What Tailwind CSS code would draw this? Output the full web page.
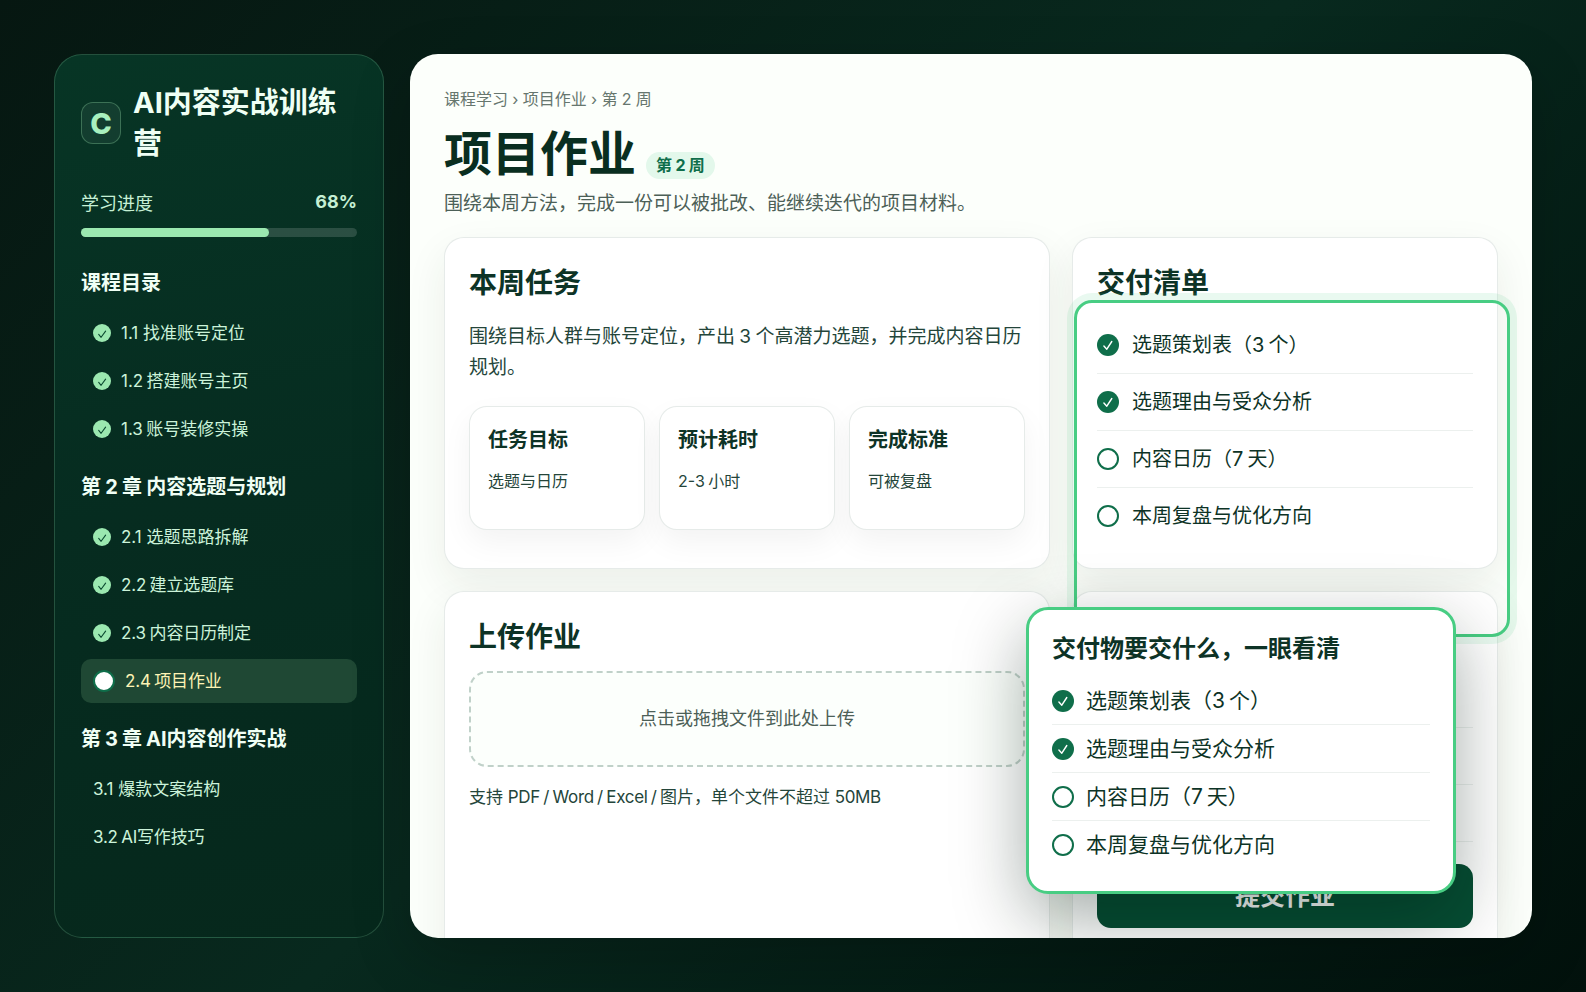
<!DOCTYPE html>
<html lang="zh-CN">
<head>
  <meta charset="UTF-8" />
  <meta name="viewport" content="width=device-width, initial-scale=1.0" />
  <title>项目作业 – AI内容实战训练营</title>
  <script src="https://cdn.jsdelivr.net/npm/@tailwindcss/browser@4"></script>
</head>
<body class="h-screen overflow-hidden bg-linear-135 from-[#061711] via-[#08291e] to-[#02110c] font-['Inter','Noto_Sans_CJK_SC',sans-serif] text-[#0d3326]">

  <!-- Ícones partilhados -->
  <svg class="hidden">
    <symbol id="feito" viewBox="0 0 22 22">
      <circle cx="11" cy="11" r="11" fill="#0f6e4a" />
      <path d="M6.9 12l2.9 3.2 5-7.7" fill="none" stroke="#fff" stroke-width="1.4" stroke-linecap="round" stroke-linejoin="round" />
    </symbol>
    <symbol id="pendente" viewBox="0 0 22 22">
      <circle cx="11" cy="11" r="10" fill="#fff" stroke="#0f6e4a" stroke-width="2" />
    </symbol>
    <symbol id="aula-feita" viewBox="0 0 18 18">
      <circle cx="9" cy="9" r="9" fill="#9be8b0" />
      <path d="M5.7 10.4l2.4 2.9 4.5-6.2" fill="none" stroke="#0b4a31" stroke-width="1.1" stroke-linecap="round" stroke-linejoin="round" />
    </symbol>
  </svg>

  <div class="flex h-full gap-[26px] p-[54px]">

    <!-- Barra lateral -->
    <aside class="w-[330px] shrink-0 rounded-[28px] border border-[#a0f0be]/20 bg-linear-170 from-[#073525] via-[#062c20] to-[#06281c] px-[26px] pt-[26px]">
      <div class="flex items-center gap-3">
        <div class="flex h-[42px] w-10 shrink-0 items-center justify-center rounded-xl border border-[#9be8b0]/30 bg-white/5 pt-0.5 text-[29px] font-extrabold text-[#a8f0be]">C</div>
        <h1 class="pt-px text-[29px] leading-[41px] font-bold text-[#effff4]">AI内容实战训练营</h1>
      </div>

      <div class="mt-[25px] flex justify-between text-lg leading-[27px] text-[#c6f0d5]">
        <span class="pt-px">学习进度</span>
        <b class="-mt-px">68%</b>
      </div>
      <div class="mt-[11px] h-[9px] rounded-full bg-white/15">
        <div class="h-full rounded-full bg-[#9be8b0]" style="width: 68%"></div>
      </div>

      <nav class="text-[17px] text-[#ccf3da]">
        <h2 class="mt-8 h-7 text-xl leading-7 font-bold text-[#f0fff5]">课程目录</h2>
        <ul class="mt-3.5 flex flex-col gap-1">
          <li class="flex h-11 items-center gap-2.5 px-3"><svg class="size-[18px]"><use href="#aula-feita" /></svg><span class="pt-0.5">1.1 找准账号定位</span></li>
          <li class="flex h-11 items-center gap-2.5 px-3"><svg class="size-[18px]"><use href="#aula-feita" /></svg><span class="pt-0.5 [word-spacing:-1.5px]">1.2 搭建账号主页</span></li>
          <li class="flex h-11 items-center gap-2.5 px-3"><svg class="size-[18px]"><use href="#aula-feita" /></svg><span class="pt-0.5 [word-spacing:-1.5px]">1.3 账号装修实操</span></li>
        </ul>
        <h2 class="mt-[22px] h-7 text-xl leading-7 font-bold text-[#f0fff5] [word-spacing:-0.5px]">第 2 章 内容选题与规划</h2>
        <ul class="mt-3.5 flex flex-col gap-1">
          <li class="flex h-11 items-center gap-2.5 px-3"><svg class="size-[18px]"><use href="#aula-feita" /></svg><span class="pt-0.5">2.1 选题思路拆解</span></li>
          <li class="flex h-11 items-center gap-2.5 px-3"><svg class="size-[18px]"><use href="#aula-feita" /></svg><span class="pt-0.5 tracking-[-0.15px] [word-spacing:-1.2px]">2.2 建立选题库</span></li>
          <li class="flex h-11 items-center gap-2.5 px-3"><svg class="size-[18px]"><use href="#aula-feita" /></svg><span class="pt-0.5 tracking-[-0.1px] [word-spacing:-1.2px]">2.3 内容日历制定</span></li>
          <li class="flex h-11 items-center gap-2.5 rounded-[10px] bg-[#1f4834] px-3 text-[#fdf3b4]"><span class="size-[22px] rounded-full border-2 border-[#0f6e4a] bg-white"></span><span class="pt-0.5 tracking-[-0.15px] [word-spacing:-1.2px]">2.4 项目作业</span></li>
        </ul>
        <h2 class="mt-[22px] h-7 text-xl leading-7 font-bold text-[#f0fff5] [word-spacing:-0.7px]">第 3 章 AI内容创作实战</h2>
        <ul class="mt-3.5 flex flex-col gap-1">
          <li class="flex h-11 items-center px-3 pt-0.5">3.1 爆款文案结构</li>
          <li class="flex h-11 items-center px-3 pt-0.5 tracking-[-0.2px] [word-spacing:-1.2px]">3.2 AI写作技巧</li>
        </ul>
      </nav>
    </aside>

    <!-- Conteúdo principal -->
    <main class="relative flex-1 overflow-hidden rounded-[28px] bg-[#fcfffb] px-[34px] pt-8 shadow-[0_20px_60px_rgba(0,0,0,0.2)]">
      <p class="text-base leading-[26px] text-[#66766e] [word-spacing:-0.2px]">课程学习 › 项目作业 › 第 2 周</p>
      <div class="mt-3 flex items-end gap-2.5">
        <h2 class="text-5xl leading-[60px] font-bold text-[#092e20]">项目作业</h2>
        <span class="mb-[5px] h-[27px] rounded-full bg-[#e3f8eb] px-2.5 text-base leading-[27px] font-bold text-[#0f6e4a] [word-spacing:-0.4px]">第 2 周</span>
      </div>
      <p class="mt-1 text-[19px] leading-[31px] text-[#4c6057]">围绕本周方法，完成一份可以被批改、能继续迭代的项目材料。</p>

      <div class="mt-[18px] grid grid-cols-[606px_426px] gap-[22px]">
        <!-- Tarefa da semana -->
        <section class="h-[332px] rounded-[20px] border border-[#0a3c28]/10 bg-white px-6 pt-[25px] shadow-[0_16px_40px_rgba(40,45,20,0.08)]">
          <h3 class="text-[28px] leading-10 font-bold">本周任务</h3>
          <p class="mt-[18px] text-[19px] leading-[31px] text-[#24453a] [word-spacing:-1px]">围绕目标人群与账号定位，产出 3 个高潜力选题，并完成内容日历规划。</p>
          <div class="mt-[23px] grid grid-cols-3 gap-3.5">
            <div class="h-[124px] rounded-[18px] border border-[#0a3c28]/10 bg-white px-[18px] pt-[18px] shadow-[0_12px_30px_rgba(0,0,0,0.05)]">
              <h4 class="text-xl leading-[30px] font-bold">任务目标</h4>
              <p class="mt-[13px] text-base leading-[26px] text-[#24453a]">选题与日历</p>
            </div>
            <div class="h-[124px] rounded-[18px] border border-[#0a3c28]/10 bg-white px-[18px] pt-[18px] shadow-[0_12px_30px_rgba(0,0,0,0.05)]">
              <h4 class="text-xl leading-[30px] font-bold">预计耗时</h4>
              <p class="mt-[13px] text-base leading-[26px] text-[#24453a] [word-spacing:-1px]">2-3 小时</p>
            </div>
            <div class="h-[124px] rounded-[18px] border border-[#0a3c28]/10 bg-white px-[18px] pt-[18px] shadow-[0_12px_30px_rgba(0,0,0,0.05)]">
              <h4 class="text-xl leading-[30px] font-bold">完成标准</h4>
              <p class="mt-[13px] text-base leading-[26px] text-[#24453a]">可被复盘</p>
            </div>
          </div>
        </section>

        <!-- Lista de entrega -->
        <section class="h-[332px] rounded-[20px] border border-[#0a3c28]/10 bg-white px-6 pt-[25px] shadow-[0_16px_40px_rgba(40,45,20,0.08)]">
          <h3 class="text-[28px] leading-10 font-bold">交付清单</h3>
          <ul class="mt-3.5 text-xl [word-spacing:-1.5px]">
            <li class="flex h-[57px] items-center gap-[13px] border-b border-[#0a3c28]/8"><svg class="size-[22px]"><use href="#feito" /></svg>选题策划表（3 个）</li>
            <li class="flex h-[57px] items-center gap-[13px] border-b border-[#0a3c28]/8"><svg class="size-[22px]"><use href="#feito" /></svg>选题理由与受众分析</li>
            <li class="flex h-[57px] items-center gap-[13px] border-b border-[#0a3c28]/8"><svg class="size-[22px]"><use href="#pendente" /></svg>内容日历（7 天）</li>
            <li class="flex h-14 items-center gap-[13px]"><svg class="size-[22px]"><use href="#pendente" /></svg>本周复盘与优化方向</li>
          </ul>
        </section>

        <!-- Envio -->
        <section class="h-[400px] rounded-[20px] border border-[#0a3c28]/10 bg-white px-6 pt-[25px] shadow-[0_16px_40px_rgba(40,45,20,0.08)]">
          <h3 class="text-[28px] leading-10 font-bold">上传作业</h3>
          <div class="mt-3.5 flex h-24 items-center justify-center rounded-[18px] border-2 border-dashed border-[#c0d1c9] bg-[#fcfffc] text-lg text-[#4c6057]">点击或拖拽文件到此处上传</div>
          <p class="mt-4 text-[17px] leading-7 text-[#24453a]">支持 <span class="tracking-[-0.3px] [word-spacing:-1.2px]">PDF / Word / Excel / </span>图片，单个文件不超过 <span class="tracking-[-0.4px]">50MB</span></p>
        </section>

        <section class="h-[400px] rounded-[20px] border border-[#0a3c28]/10 bg-white px-6 pt-[79px] shadow-[0_16px_40px_rgba(40,45,20,0.08)]">
          <div class="h-[57px] border-b border-[#0a3c28]/8"></div>
          <div class="h-[57px] border-b border-[#0a3c28]/8"></div>
          <div class="h-[57px] border-b border-[#0a3c28]/8"></div>
          <button class="mt-[22px] h-16 w-full rounded-[14px] bg-[#064d33] pt-0.5 text-[25px] font-bold text-white">提交作业</button>
        </section>
      </div>

      <!-- Destaque sobre a lista -->
      <div class="absolute top-[246px] left-[664px] h-[337px] w-[436px] rounded-[18px] border-3 border-[#48cd83] shadow-[0_0_0_7px_rgba(72,205,131,0.12)]"></div>
      <div class="absolute top-[553px] left-[616px] h-[287px] w-[430px] rounded-[22px] border-3 border-[#48cd83] bg-white px-[23px] pt-[21px] shadow-[0_24px_70px_rgba(0,25,18,0.36)]">
        <h3 class="text-2xl leading-9 font-bold">交付物要交什么，一眼看清</h3>
        <ul class="mt-2.5 text-[21px] [word-spacing:-2px]">
          <li class="flex h-12 items-center gap-3 border-b border-[#0a3c28]/8"><svg class="size-[22px]"><use href="#feito" /></svg>选题策划表（3 个）</li>
          <li class="flex h-12 items-center gap-3 border-b border-[#0a3c28]/8"><svg class="size-[22px]"><use href="#feito" /></svg>选题理由与受众分析</li>
          <li class="flex h-12 items-center gap-3 border-b border-[#0a3c28]/8"><svg class="size-[22px]"><use href="#pendente" /></svg>内容日历（7 天）</li>
          <li class="flex h-12 items-center gap-3"><svg class="size-[22px]"><use href="#pendente" /></svg>本周复盘与优化方向</li>
        </ul>
      </div>
    </main>
  </div>

</body>
</html>
